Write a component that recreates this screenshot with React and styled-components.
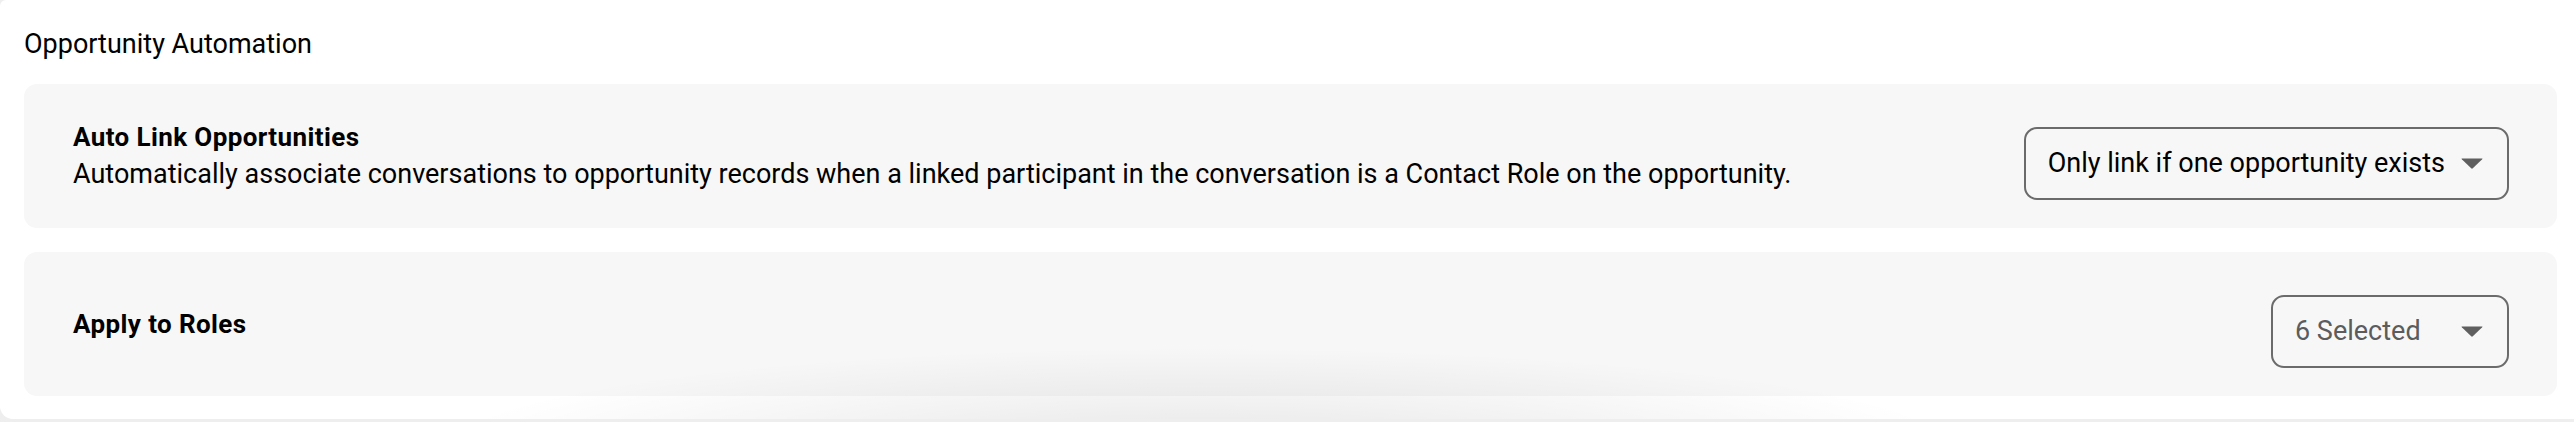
import React from "react";
import styled, { createGlobalStyle } from "styled-components";

const GlobalStyle = createGlobalStyle`
  html, body {
    margin: 0;
    padding: 0;
    background: #eeeeee;
  }
  body {
    font-family: Roboto, "Liberation Sans", Arial, sans-serif;
    color: #000;
    overflow: hidden;
  }
`;

const Card = styled.section`
  position: relative;
  overflow: hidden;
  background: #ffffff;
  border-radius: 6px 0 0 13px;
  padding: 24px 17px 23px 24px;
  display: flex;
  flex-direction: column;
`;

const Title = styled.h2`
  margin: 0 0 20px;
  font-size: 27px;
  line-height: 40px;
  font-weight: 400;
`;

const PanelList = styled.div`
  display: flex;
  flex-direction: column;
  gap: 24px;
`;

const Panel = styled.div`
  display: flex;
  align-items: center;
  justify-content: space-between;
  gap: 48px;
  height: 144px;
  box-sizing: border-box;
  padding: 0 48px 0 49px;
  background: #f7f7f7;
  border-radius: 13px;
`;

const TextBlock = styled.div`
  display: flex;
  flex-direction: column;
`;

const Heading = styled.div`
  font-size: 26px;
  line-height: 37px;
  font-weight: 700;
  letter-spacing: 0.4px;
`;

const Description = styled.div`
  font-size: 27px;
  line-height: 37px;
  font-weight: 400;
`;

const SelectButton = styled.button`
  flex: none;
  display: inline-flex;
  align-items: center;
  justify-content: space-between;
  gap: 16px;
  height: 73px;
  min-width: ${(p) => p.$minWidth || "0px"};
  margin-top: 15px;
  box-sizing: border-box;
  padding: 0 24px 0 22px;
  border: 2px solid #6b6b6b;
  border-radius: 13px;
  background: transparent;
  font-family: inherit;
  font-size: 27px;
  line-height: 37px;
  color: ${(p) => (p.$muted ? "#5c5c5c" : "#000")};
  cursor: pointer;
`;

const Caret = styled.svg`
  flex: none;
  width: 22px;
  height: 11px;
  display: block;
`;

const BottomShadow = styled.div`
  position: absolute;
  left: 450px;
  width: 1500px;
  bottom: -130px;
  height: 200px;
  pointer-events: none;
  background: radial-gradient(
    ellipse at center,
    rgba(0, 0, 0, 0.1) 0%,
    rgba(0, 0, 0, 0.05) 35%,
    rgba(0, 0, 0, 0) 72%
  );
`;

function CaretIcon() {
  return (
    <Caret viewBox="0 0 22 11" aria-hidden="true">
      <path d="M1 0.5 H21 Q22 0.5 21.2 1.3 L11.8 10.3 Q11 11 10.2 10.3 L0.8 1.3 Q0 0.5 1 0.5 Z" fill="#5f5f5f" />
    </Caret>
  );
}

function Select({ label, muted, minWidth }) {
  return (
    <SelectButton type="button" $muted={muted} $minWidth={minWidth}>
      <span>{label}</span>
      <CaretIcon />
    </SelectButton>
  );
}

export default function App() {
  return (
    <>
      <GlobalStyle />
      <Card>
        <Title>Opportunity Automation</Title>
        <PanelList>
          <Panel>
            <TextBlock>
              <Heading>Auto Link Opportunities</Heading>
              <Description>
                Automatically associate conversations to opportunity records when a linked participant in the conversation is a Contact Role on the opportunity.
              </Description>
            </TextBlock>
            <Select label="Only link if one opportunity exists" />
          </Panel>
          <Panel>
            <TextBlock>
              <Heading>Apply to Roles</Heading>
            </TextBlock>
            <Select label="6 Selected" muted minWidth="238px" />
          </Panel>
        </PanelList>
        <BottomShadow />
      </Card>
    </>
  );
}
